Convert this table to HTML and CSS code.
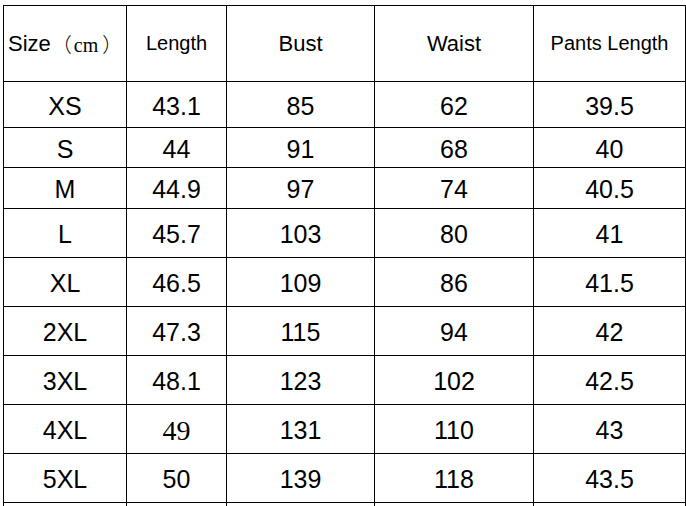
FILE: index.html
```html
<!DOCTYPE html>
<html>
<head>
<meta charset="utf-8">
<link rel="stylesheet" href="styles.css">
</head>
<body>
<div class="sheet">
  <div class="grid">
    <div class="cell head first">Size<span class="unit">（<span class="cm">cm</span>）</span></div>
    <div class="cell head small">Length</div>
    <div class="cell head">Bust</div>
    <div class="cell head">Waist</div>
    <div class="cell head small">Pants Length</div>

    <div class="cell">XS</div><div class="cell">43.1</div><div class="cell">85</div><div class="cell">62</div><div class="cell">39.5</div>
    <div class="cell">S</div><div class="cell">44</div><div class="cell">91</div><div class="cell">68</div><div class="cell">40</div>
    <div class="cell">M</div><div class="cell">44.9</div><div class="cell">97</div><div class="cell">74</div><div class="cell">40.5</div>
    <div class="cell">L</div><div class="cell">45.7</div><div class="cell">103</div><div class="cell">80</div><div class="cell">41</div>
    <div class="cell">XL</div><div class="cell">46.5</div><div class="cell">109</div><div class="cell">86</div><div class="cell">41.5</div>
    <div class="cell">2XL</div><div class="cell">47.3</div><div class="cell">115</div><div class="cell">94</div><div class="cell">42</div>
    <div class="cell">3XL</div><div class="cell">48.1</div><div class="cell">123</div><div class="cell">102</div><div class="cell">42.5</div>
    <div class="cell">4XL</div><div class="cell serif">49</div><div class="cell">131</div><div class="cell">110</div><div class="cell">43</div>
    <div class="cell">5XL</div><div class="cell">50</div><div class="cell">139</div><div class="cell">118</div><div class="cell">43.5</div>
    <div class="cell"></div><div class="cell"></div><div class="cell"></div><div class="cell"></div><div class="cell"></div>
  </div>
</div>
</body>
</html>
```

FILE: styles.css
```css
html, body {
  margin: 0;
  padding: 0;
  background: #fff;
  overflow: hidden;
  height: 506px;
}

.sheet {
  padding: 5px 0 0 3px;
  font-family: "Liberation Sans", Arial, sans-serif;
  color: #000;
}

.grid {
  display: grid;
  grid-template-columns: 122px 99px 147px 158px 151px;
  grid-template-rows: 75px 45px 39px 40px 48px 48px 48px 48px 48px 48px 48px;
  gap: 1px;
  padding: 1px;
  background: #000;
  width: max-content;
}

.cell {
  background: #fff;
  display: flex;
  align-items: center;
  justify-content: center;
  font-size: 25px;
  padding-top: 3px;
  box-sizing: border-box;
}

.head {
  font-size: 22px;
  padding-top: 0;
}

.head.small {
  font-size: 20px;
}

.first {
  justify-content: flex-start;
  padding-left: 4px;
}

.unit {
  font-family: "Noto Sans CJK SC", serif;
  font-size: 20px;
  margin-left: 1px;
  font-weight: 300;
}

.cm {
  font-family: "Liberation Serif", serif;
  font-size: 20px;
  font-weight: 400;
  margin: 0 4px 0 2px;
}

.cell.serif {
  font-family: "Liberation Serif", "Times New Roman", serif;
  font-size: 28px;
}
```
